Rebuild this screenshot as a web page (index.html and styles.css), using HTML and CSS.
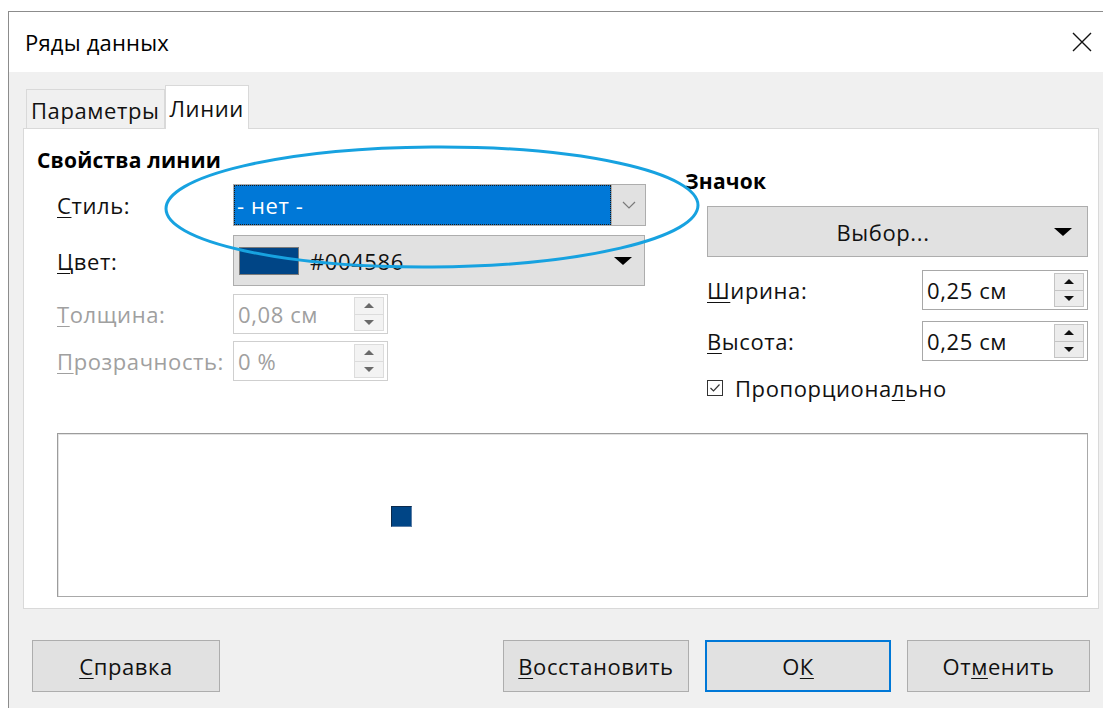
FILE: index.html
```html
<!DOCTYPE html>
<html lang="ru">
<head>
<meta charset="utf-8">
<title>Ряды данных</title>
<link rel="stylesheet" href="styles.css">
</head>
<body>
<div class="window">
  <header class="titlebar">
    <span class="title">Ряды данных</span>
    <svg class="close" viewBox="0 0 20 20" aria-label="Закрыть">
      <path d="M1 1 L19 19 M19 1 L1 19" stroke="#111" stroke-width="1.4" fill="none"/>
    </svg>
  </header>

  <div class="dialog">
    <nav class="tabs">
      <div class="tab">Параметры</div>
      <div class="tab active">Линии</div>
    </nav>

    <div class="panel">
      <div class="top">
        <section class="line-props">
          <h2 class="heading">Свойства линии</h2>

          <div class="row row-style">
            <label class="label"><u>С</u>тиль:</label>
            <div class="combo">
              <div class="combo-value">- нет -</div>
              <div class="combo-btn">
                <svg viewBox="0 0 14 8" width="14" height="8"><polyline points="1,1 7,7 13,1" fill="none" stroke="#7a7a7a" stroke-width="1.2"/></svg>
              </div>
            </div>
          </div>

          <div class="row row-color">
            <label class="label"><u>Ц</u>вет:</label>
            <div class="color-box">
              <span class="swatch"></span>
              <span class="color-name">#004586</span>
              <svg class="tri" viewBox="0 0 18 8" width="18" height="8"><polygon points="0,0 18,0 9,8" fill="#000"/></svg>
            </div>
          </div>

          <div class="row row-spin disabled">
            <label class="label"><u>Т</u>олщина:</label>
            <div class="spin spin-left">
              <span class="spin-value">0,08 см</span>
              <div class="spin-btns">
                <span class="spin-btn"><svg viewBox="0 0 10 5" width="10" height="5"><polygon points="0,5 10,5 5,0"/></svg></span>
                <span class="spin-btn"><svg viewBox="0 0 10 5" width="10" height="5"><polygon points="0,0 10,0 5,5"/></svg></span>
              </div>
            </div>
          </div>

          <div class="row row-spin row-last disabled">
            <label class="label"><u>П</u>розрачность:</label>
            <div class="spin spin-left">
              <span class="spin-value">0 %</span>
              <div class="spin-btns">
                <span class="spin-btn"><svg viewBox="0 0 10 5" width="10" height="5"><polygon points="0,5 10,5 5,0"/></svg></span>
                <span class="spin-btn"><svg viewBox="0 0 10 5" width="10" height="5"><polygon points="0,0 10,0 5,5"/></svg></span>
              </div>
            </div>
          </div>
        </section>

        <section class="symbol">
          <h2 class="heading">Значок</h2>

          <button class="select-btn" type="button">
            <span class="select-text">Выбор...</span>
            <svg class="tri" viewBox="0 0 18 8" width="18" height="8"><polygon points="0,0 18,0 9,8" fill="#000"/></svg>
          </button>

          <div class="srow srow-first">
            <label class="label"><u>Ш</u>ирина:</label>
            <div class="spin spin-right">
              <span class="spin-value">0,25 см</span>
              <div class="spin-btns">
                <span class="spin-btn"><svg viewBox="0 0 10 5" width="10" height="5"><polygon points="0,5 10,5 5,0"/></svg></span>
                <span class="spin-btn"><svg viewBox="0 0 10 5" width="10" height="5"><polygon points="0,0 10,0 5,5"/></svg></span>
              </div>
            </div>
          </div>

          <div class="srow srow-second">
            <label class="label"><u>В</u>ысота:</label>
            <div class="spin spin-right">
              <span class="spin-value">0,25 см</span>
              <div class="spin-btns">
                <span class="spin-btn"><svg viewBox="0 0 10 5" width="10" height="5"><polygon points="0,5 10,5 5,0"/></svg></span>
                <span class="spin-btn"><svg viewBox="0 0 10 5" width="10" height="5"><polygon points="0,0 10,0 5,5"/></svg></span>
              </div>
            </div>
          </div>

          <div class="check">
            <svg class="check-box" viewBox="0 0 16 16" width="16" height="16">
              <rect x="0.5" y="0.5" width="15" height="15" fill="#fff" stroke="#333"/>
              <polyline points="3.5,8 6.5,11 12.5,4.5" fill="none" stroke="#333" stroke-width="1.2"/>
            </svg>
            <span>Пропорциона<span class="ul">л</span>ьно</span>
          </div>
        </section>
      </div>

      <div class="preview">
        <div class="marker"></div>
      </div>
    </div>

    <footer class="buttons">
      <button class="btn btn-help" type="button"><u>С</u>правка</button>
      <div class="btn-group">
        <button class="btn" type="button"><u>В</u>осстановить</button>
        <button class="btn btn-default" type="button">О<u>К</u></button>
        <button class="btn btn-cancel" type="button">От<u>м</u>енить</button>
      </div>
    </footer>
  </div>
</div>

<svg class="annotation" viewBox="0 0 1103 708" width="1103" height="708">
  <ellipse cx="432" cy="207" rx="266" ry="60" transform="rotate(-0.4 432 207)" fill="none" stroke="#17a2e0" stroke-width="3"/>
</svg>
</body>
</html>
```

FILE: styles.css
```css
* {
  box-sizing: border-box;
}

html,
body {
  margin: 0;
  height: 100%;
}

body {
  position: relative;
  overflow: hidden;
  background: #fff;
  color: #000;
  font-family: "Open Sans", "Noto Sans", "DejaVu Sans", sans-serif;
  font-size: 22px;
  letter-spacing: 0.6px;
}

u,
.ul {
  text-decoration: underline;
  text-underline-offset: 3px;
  text-decoration-thickness: 1px;
}

/* window frame */
.window {
  display: flex;
  flex-direction: column;
  height: calc(100% - 11px);
  margin: 11px 0 0 8px;
  border-top: 1px solid #8c8c8c;
  border-left: 1px solid #8c8c8c;
}

.titlebar {
  flex: none;
  display: flex;
  align-items: center;
  justify-content: space-between;
  height: 60px;
  padding: 0 11px 0 16px;
  background: #fff;
}

.title {
  font-size: 22px;
  letter-spacing: 0.2px;
}

.close {
  width: 20px;
  height: 20px;
}

.dialog {
  flex: 1;
  padding: 13px 4px 0 14px;
  background: #f0f0f0;
}

/* tabs */
.tabs {
  position: relative;
  z-index: 1;
  display: flex;
  align-items: flex-end;
  height: 43px;
  padding-left: 3px;
}

.tab {
  display: flex;
  align-items: center;
  height: 39px;
  padding: 1px 4px 0;
  border: 1px solid #d9d9d9;
  border-bottom: none;
  background: #f0f0f0;
  color: #111;
}

.tab.active {
  height: 44px;
  margin-bottom: -1px;
  padding-top: 0;
  background: #fff;
}

/* tab page */
.panel {
  height: 481px;
  padding: 19px 10px 0 13px;
  border: 1px solid #d9d9d9;
  background: #fff;
}

.top {
  display: grid;
  grid-template-columns: 609px 1fr;
  column-gap: 40px;
  height: 252px;
}

.heading {
  height: 24px;
  margin: 0;
  font-size: 21px;
  font-weight: 700;
  line-height: 24px;
  letter-spacing: 0.2px;
}

.line-props .heading {
  margin-bottom: 12px;
}

.row {
  display: flex;
  align-items: center;
  margin-left: 20px;
}

.label {
  color: #111;
}

.row .label {
  width: 176px;
  flex: none;
  white-space: nowrap;
}

.row-style {
  height: 42px;
}

.row-color {
  height: 51px;
  margin-top: 9px;
}

.row-spin {
  height: 40px;
  margin-top: 8px;
}

.row-last {
  margin-top: 7px;
}

.disabled .label,
.disabled .spin-value {
  color: #a0a0a0;
}

/* style list box */
.combo {
  display: flex;
  width: 413px;
  height: 42px;
  border: 1px solid #adadad;
  background: #e1e1e1;
}

.combo-value {
  flex: 1;
  display: flex;
  align-items: center;
  padding-left: 2px;
  border: 1px dotted #1a1a1a;
  background: #0078d7;
  color: #fff;
}

.combo-btn {
  display: flex;
  align-items: center;
  justify-content: center;
  width: 34px;
  border-left: 1px solid #adadad;
}

/* colour list box */
.color-box {
  display: flex;
  align-items: center;
  width: 412px;
  height: 51px;
  padding: 0 12px 0 5px;
  border: 1px solid #adadad;
  background: #e1e1e1;
}

.swatch {
  width: 60px;
  height: 28px;
  border: 1px solid #7a7a7a;
  background: #004586;
}

.color-name {
  flex: 1;
  margin-left: 11px;
  color: #111;
}

/* spin fields */
.spin {
  display: flex;
  align-items: center;
  height: 40px;
  padding: 2px 3px 2px 4px;
  border: 1px solid #b4b4b4;
  background: #fff;
}

.spin-left {
  width: 155px;
}

.spin-right {
  width: 166px;
  border-color: #a8a8a8;
}

.spin-value {
  flex: 1;
  color: #111;
  white-space: nowrap;
}

.spin-btns {
  display: flex;
  flex-direction: column;
  width: 30px;
  height: 34px;
}

.spin-btn {
  flex: 1;
  display: flex;
  align-items: center;
  justify-content: center;
  border: 1px solid #c4c4c4;
  background: #ececec;
  fill: #111;
}

.spin-btn + .spin-btn {
  border-top: none;
}

.disabled .spin {
  border-color: #cfcfcf;
}

.disabled .spin-btn {
  border-color: #dcdcdc;
  background: #f3f3f3;
  fill: #6a6a6a;
}

/* symbol column */
.symbol .heading {
  margin-top: 21px;
  margin-left: -1px;
}

.select-btn {
  display: flex;
  align-items: center;
  width: 381px;
  height: 51px;
  margin: 13px 0 0 21px;
  padding: 0 15px 0 0;
  border: 1px solid #adadad;
  background: #e1e1e1;
  font: inherit;
  letter-spacing: inherit;
  color: #111;
}

.select-text {
  flex: 1;
  text-align: center;
  padding-left: 4px;
}

.srow {
  display: flex;
  align-items: center;
  justify-content: space-between;
  height: 40px;
  margin-left: 21px;
}

.srow-first {
  margin-top: 13px;
}

.srow-second {
  margin-top: 11px;
}

.check {
  display: flex;
  align-items: center;
  gap: 12px;
  height: 24px;
  margin: 15px 0 0 21px;
  color: #111;
}

/* preview */
.preview {
  display: flex;
  align-items: center;
  height: 164px;
  margin: 33px 0 0 20px;
  padding-left: 333px;
  border: 1px solid #a9a9a9;
  border-top-color: #9c9c9c;
  border-left-color: #9c9c9c;
  box-shadow: inset 1px 1px 0 #e3e3e3;
  background: #fff;
}

.marker {
  width: 21px;
  height: 21px;
  margin-top: 2px;
  border: 1px solid #5b7ea6;
  border-top-color: #0c2a4c;
  border-left-color: #0c2a4c;
  background: #004586;
}

/* dialog buttons */
.buttons {
  display: flex;
  justify-content: space-between;
  margin-top: 31px;
  padding: 0 9px;
}

.btn-group {
  display: flex;
  gap: 16px;
}

.btn {
  width: 186px;
  height: 52px;
  padding: 0;
  border: 1px solid #adadad;
  background: #e1e1e1;
  font: inherit;
  letter-spacing: inherit;
  color: #111;
}

.btn-help {
  width: 188px;
}

.btn-cancel {
  width: 183px;
}

.btn-default {
  border: 2px solid #0078d7;
}

/* freehand marker drawn over the dialog */
.annotation {
  position: absolute;
  left: 0;
  top: 0;
  pointer-events: none;
}
```
